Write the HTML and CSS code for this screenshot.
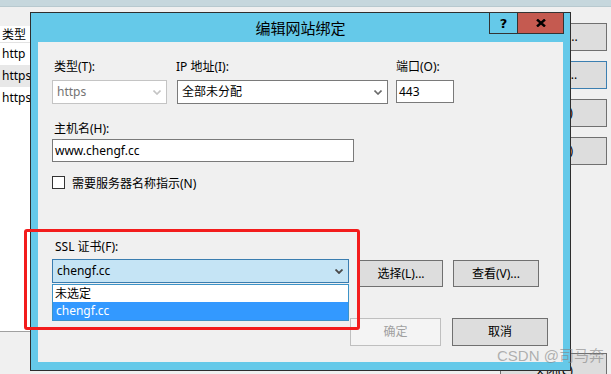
FILE: index.html
```html
<!DOCTYPE html>
<html>
<head>
    <title>编辑网站绑定</title>
    <link rel="stylesheet" href="styles.css">
</head>
<body>
    <div class="top-strip"></div>

    <div class="backdrop">
        <div class="site-list">
            <div class="list-head">类型</div>
            <div class="list-row">http</div>
            <div class="list-row hover">https</div>
            <div class="list-row">https</div>
        </div>

        <div class="side-buttons">
            <div class="side-btn">添加(A)...</div>
            <div class="side-btn focus">编辑(E)...</div>
            <div class="side-btn">删除(R)</div>
            <div class="side-btn">浏览(B)</div>
            <div class="side-btn close-btn">关闭(C)</div>
        </div>
    </div>

    <div class="dialog">
        <div class="title-bar">编辑网站绑定</div>
        <div class="caption-buttons">
            <div class="cap-btn help">?</div>
            <div class="cap-btn close">
                <svg width="10" height="8" viewBox="0 0 10 8">
                    <path d="M1 0.5 L9 7.5 M9 0.5 L1 7.5" stroke="#000" stroke-width="2.4" fill="none"/>
                </svg>
            </div>
        </div>

        <div class="client">
            <div class="row-fields">
                <div class="field f-type">
                    <div class="label">类型(T):</div>
                    <div class="combo disabled">
                        <span>https</span>
                        <svg class="chev" width="8" height="5" viewBox="0 0 8 5"><path d="M0.5 0.5 L4 4 L7.5 0.5" stroke="#c4c4c4" stroke-width="1.6" fill="none"/></svg>
                    </div>
                </div>
                <div class="field f-ip">
                    <div class="label">IP 地址(I):</div>
                    <div class="combo">
                        <span>全部未分配</span>
                        <svg class="chev" width="8" height="5" viewBox="0 0 8 5"><path d="M0.5 0.5 L4 4 L7.5 0.5" stroke="#6a6a6a" stroke-width="1.6" fill="none"/></svg>
                    </div>
                </div>
                <div class="field f-port">
                    <div class="label">端口(O):</div>
                    <div class="textbox port">443</div>
                </div>
            </div>

            <div class="label host-label">主机名(H):</div>
            <div class="textbox host">www.chengf.cc</div>

            <div class="check-row">
                <div class="checkbox"></div>
                <span>需要服务器名称指示(N)</span>
            </div>

            <div class="label ssl-label">SSL 证书(F):</div>
            <div class="ssl-row">
                <div class="combo ssl">
                    <span>chengf.cc</span>
                    <svg class="chev" width="8" height="5" viewBox="0 0 8 5"><path d="M0.5 0.5 L4 4 L7.5 0.5" stroke="#4a4a4a" stroke-width="1.8" fill="none"/></svg>
                    <div class="drop-list">
                        <div class="drop-item">未选定</div>
                        <div class="drop-item selected">chengf.cc</div>
                    </div>
                </div>
                <div class="btn btn-select">选择(L)...</div>
                <div class="btn btn-view">查看(V)...</div>
            </div>

            <div class="footer">
                <div class="btn btn-ok disabled">确定</div>
                <div class="btn btn-cancel">取消</div>
            </div>
        </div>
    </div>

    <div class="highlight"></div>
    <div class="watermark">CSDN @司马奔</div>
</body>
</html>
```

FILE: styles.css
```css
* {
    margin: 0;
    padding: 0;
    box-sizing: border-box;
}

body {
    width: 611px;
    height: 374px;
    overflow: hidden;
    position: relative;
    background: #f0f0f0;
    font-family: 'Noto Sans', 'Noto Sans CJK SC', sans-serif;
    font-size: 12px;
    color: #000;
}

/* window behind the dialog */
.top-strip {
    height: 7px;
    background: #c6d7dd;
    border-bottom: 1px solid #b8c9cf;
}

.backdrop {
    display: flex;
    align-items: flex-start;
}

.site-list {
    width: 120px;
    height: 306px;
    margin-top: 19px;
    background: #fff;
    border-bottom: 1px solid #a0a0a0;
}

.list-head {
    height: 17px;
    line-height: 18px;
    padding-left: 2px;
    border-bottom: 1px solid #e3e3e3;
}

.list-row {
    height: 22px;
    line-height: 21px;
    padding-left: 2px;
}

.list-row.hover {
    background: #e8e8e8;
}

.side-buttons {
    margin-left: auto;
    margin-right: 4px;
    margin-top: 16px;
    display: flex;
    flex-direction: column;
    gap: 10px;
}

.side-btn {
    width: 107px;
    height: 28px;
    line-height: 26px;
    text-align: center;
    background: #dddddd;
    border: 1px solid #707070;
    color: #000;
}

.side-btn.focus {
    border-color: #3c7fb1;
}

.side-btn.close-btn {
    margin-top: 178px;
    line-height: 34px;
}

/* dialog */
.dialog {
    position: absolute;
    left: 30px;
    top: 12px;
    width: 541px;
    height: 359px;
    background: #65c9e9;
    border: 1px solid #2e2e2e;
}

.title-bar {
    height: 29px;
    line-height: 30px;
    text-align: center;
    font-family: 'Noto Sans CJK SC', sans-serif;
    font-size: 15px;
    color: #000;
}

.caption-buttons {
    position: absolute;
    top: -1px;
    right: 6px;
    display: flex;
}

.cap-btn {
    height: 22px;
    border: 1px solid #333;
    display: flex;
    align-items: center;
    justify-content: center;
}

.cap-btn.help {
    width: 29px;
    background: #65c9e9;
    font-family: 'DejaVu Sans', sans-serif;
    font-weight: bold;
    font-size: 13px;
}

.cap-btn.close {
    width: 47px;
    margin-left: -1px;
    background: #c55a50;
}

.client {
    height: 320px;
    margin: 0 7px;
    background: #f0f0f0;
    padding: 16px 15px 0 14px;
}

.label {
    height: 18px;
    line-height: 18px;
    padding-left: 2px;
}

.row-fields {
    display: flex;
}

.field .label {
    margin-bottom: 4px;
}

.f-type { width: 115px; }
.f-ip { width: 211px; margin-left: 10px; }
.f-ip .label { padding-left: 0; margin-left: -1px; }
.f-port { width: 58px; margin-left: 8px; }
.f-port .label { padding-left: 0; }

.combo {
    position: relative;
    height: 24px;
    line-height: 22px;
    border: 1px solid #7a7a7a;
    background: #fff;
    padding-left: 4px;
}

.combo .chev {
    position: absolute;
    right: 5px;
    top: 9px;
}

.combo.disabled {
    border-color: #c4c4c4;
    color: #737373;
}

.textbox {
    height: 23px;
    line-height: 21px;
    border: 1px solid #7a7a7a;
    background: #fff;
    padding-left: 2px;
}

.host-label {
    margin-top: 16px;
    margin-bottom: 1px;
}

.textbox.host {
    width: 302px;
}

.check-row {
    margin-top: 14px;
    display: flex;
    align-items: center;
    gap: 7px;
    height: 13px;
}

.checkbox {
    width: 13px;
    height: 13px;
    border: 1px solid #333;
    background: #fff;
}

.ssl-label {
    margin-top: 49px;
    padding-left: 3px;
}

.ssl-row {
    margin-top: 3px;
    display: flex;
    align-items: flex-start;
    gap: 10px;
}

.combo.ssl {
    width: 297px;
    background: #c5e4f5;
    border-color: #3a7db0;
}

.drop-list {
    position: absolute;
    left: -1px;
    top: 24px;
    width: 297px;
    height: 37px;
    background: #fff;
    border: 1px solid #3c93c8;
    border-top: none;
}

.drop-item {
    height: 18px;
    line-height: 17px;
    padding-left: 3px;
}

.drop-item:first-child {
    border-top: 1px solid #3c93c8;
    padding-left: 2px;
}

.drop-item.selected {
    background: #3399ff;
    color: #fff;
}

.btn {
    height: 27px;
    line-height: 25px;
    text-align: center;
    background: #dddddd;
    border: 1px solid #707070;
}

.btn-select { width: 84px; margin-top: 1px; }
.btn-view { width: 86px; margin-top: 1px; }

.footer {
    margin-top: 31px;
    display: flex;
    justify-content: flex-end;
    gap: 11px;
}

.btn-ok, .btn-cancel {
    height: 28px;
    line-height: 26px;
}

.btn-ok { width: 91px; }
.btn-cancel { width: 96px; }

.btn.disabled {
    background: #f4f4f4;
    border-color: #bfbfbf;
    color: #a0a0a0;
}

/* annotation overlays */
.highlight {
    position: absolute;
    left: 24px;
    top: 229px;
    width: 336px;
    height: 101px;
    border: 3px solid #f31c1c;
    border-radius: 3px;
}

.watermark {
    position: absolute;
    left: 497px;
    top: 344px;
    white-space: nowrap;
    font-family: 'Liberation Sans', 'Noto Sans CJK SC', sans-serif;
    font-size: 15px;
    color: rgba(130, 130, 130, 0.6);
}
```
